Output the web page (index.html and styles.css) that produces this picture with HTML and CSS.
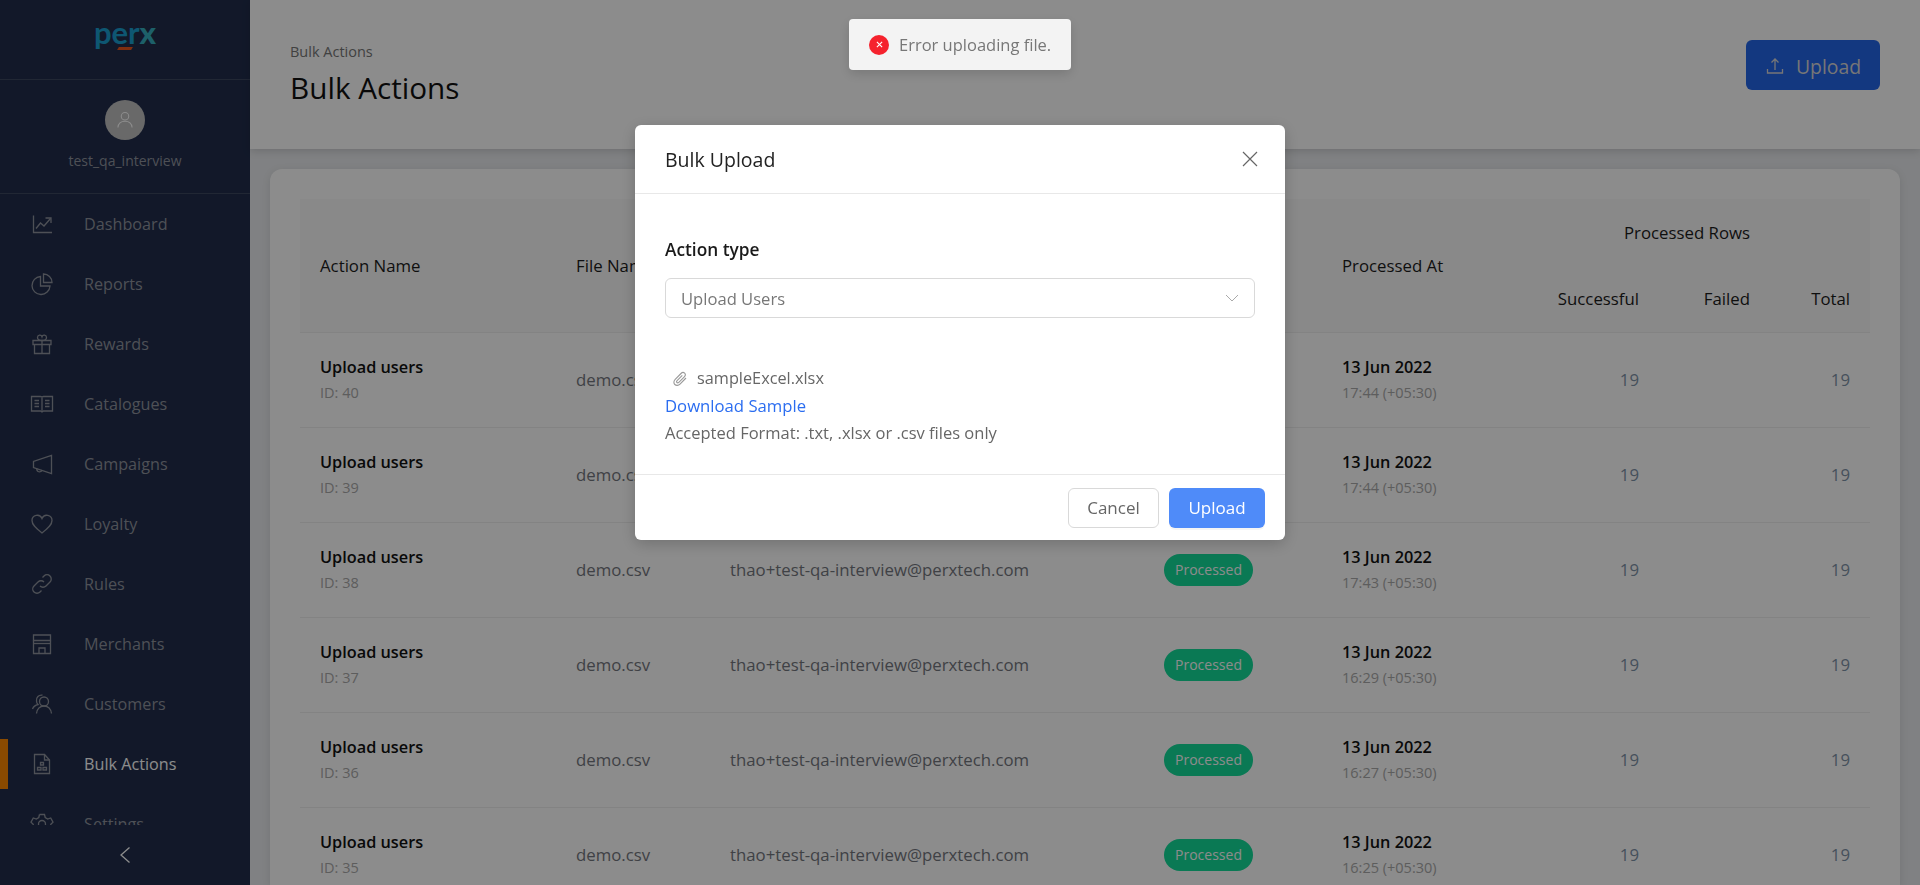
FILE: index.html
```html
<!DOCTYPE html>
<html>
<head>
<meta charset="UTF-8">
<title>Bulk Actions</title>
<link rel="stylesheet" href="styles.css">
</head>
<body>
<div class="layout">
	<!-- sidebar -->
	<aside class="sidebar">
		<div class="logo"><span class="logo-text">per<b>x</b></span><i class="logo-mark"></i></div>
		<div class="profile">
			<div class="avatar">
				<svg viewBox="0 0 24 24" width="20" height="20"><circle cx="12" cy="7.5" r="4.5"/><path d="M3.5 21c.5-5 4-7.5 8.5-7.5s8 2.500 8.500 7.500"/></svg>
			</div>
			<div class="username">test_qa_interview</div>
		</div>
		<nav class="menu">
			<a class="menu-item"><svg viewBox="0 0 24 24"><path d="M3.500 3.500V20.500H22"/><path d="M6 16.500l4.500-5.500 3.500 3 6.500-7.500"/><path d="M15.500 6H21v5"/></svg>Dashboard</a>
			<a class="menu-item"><svg viewBox="0 0 24 24"><path d="M10.500 4.500a9 9 0 1 0 9.500 9.500H10.500Z"/><path d="M13.500 2a8.500 8.500 0 0 1 8.500 8.500h-8.500Z"/></svg>Reports</a>
			<a class="menu-item"><svg viewBox="0 0 24 24"><path d="M3 8.500h18v4H3Z"/><path d="M4.500 12.500V21.500h15v-9"/><path d="M12 8.500v13"/><path d="M12 8.500C9 8.500 7.500 7.500 7.500 5.500a2.300 2.300 0 0 1 4.500-.7 2.300 2.300 0 0 1 4.500.7C16.500 7.500 15 8.500 12 8.500Z"/></svg>Rewards</a>
			<a class="menu-item"><svg viewBox="0 0 24 24"><path d="M1.500 4.500h9c1 0 1.500.5 1.500 1 0-.5.5-1 1.500-1h9V19h-9l-1.500 1-1.500-1h-9Z"/><path d="M12 5.500V20"/><path d="M4.500 8.500h4.500M4.500 11.500h4.500M4.500 14.500h4.500M15 8.500h4.500M15 11.500h4.500M15 14.500h4.500"/></svg>Catalogues</a>
			<a class="menu-item"><svg viewBox="0 0 24 24"><path d="M21.500 3.500V21.500L3.500 15.500V9.500Z"/><path d="M7 16.500a2.600 2.600 0 0 0 5 1.500"/></svg>Campaigns</a>
			<a class="menu-item"><svg viewBox="0 0 24 24"><path d="M12 21C5 15.500 2 12.500 2 8.500A5.200 5.200 0 0 1 12 6.500 5.200 5.200 0 0 1 22 8.500C22 12.500 19 15.500 12 21Z"/></svg>Loyalty</a>
			<a class="menu-item"><svg viewBox="0 0 24 24"><path d="M10 14a4.200 4.200 0 0 0 6 0l4-4a4.200 4.200 0 0 0-6-6l-1.500 1.500"/><path d="M14 10a4.200 4.200 0 0 0-6 0l-4 4a4.200 4.200 0 0 0 6 6l1.500-1.500"/></svg>Rules</a>
			<a class="menu-item"><svg viewBox="0 0 24 24"><path d="M3.500 3h17v5.500h-17Z"/><path d="M3.500 8.500v13h17v-13"/><path d="M3.500 11.500h17"/><path d="M9 21.500v-5.500h6v5.500"/></svg>Merchants</a>
			<a class="menu-item"><svg viewBox="0 0 24 24"><circle cx="14" cy="9.500" r="4.500"/><path d="M6.500 21.500c.5-4.500 3.500-7.500 7.500-7.500s7 3 7.500 7.500"/><path d="M12.500 3.200A5 5 0 0 0 6.500 9c0 1.500.5 2.500 1.500 3.500C5.500 13 3.500 14.500 2.500 17"/></svg>Customers</a>
			<a class="menu-item active"><svg viewBox="0 0 24 24"><path d="M4.500 2.500h10l5 5.500v13.500h-15Z"/><path d="M14.500 2.500V8h5"/><path d="M10.500 10.500h3v2.500h-3ZM7.500 15.500h3.500v2.500H7.500ZM13 15.500h3.500v2.500H13Z"/></svg>Bulk Actions</a>
			<a class="menu-item"><svg viewBox="0 0 24 24"><circle cx="12" cy="12" r="3.500"/><path d="M9.500 2.500h5l.7 3 2.500 1.500 3-1 2.300 4.200-2.200 2.100v2.900"/><path d="M9.500 2.500l-.7 3-2.500 1.500-3-1L1 10.200l2.200 2.100v2.900"/></svg>Settings</a>
		</nav>
		<div class="collapse">
			<svg viewBox="0 0 12 18" width="12" height="18"><path d="M10.500 1.500L2 9l8.500 7.500"/></svg>
		</div>
	</aside>

	<!-- main area -->
	<main class="main">
		<header class="page-header">
			<div>
				<div class="breadcrumb">Bulk Actions</div>
				<h1 class="page-title">Bulk Actions</h1>
			</div>
			<button class="btn-upload">
				<svg viewBox="0 0 20 20" width="20" height="20"><path d="M10 14V3M6.500 6.500L10 3l3.500 3.500"/><path d="M2.500 13v4h15v-4"/></svg>
				Upload
			</button>
		</header>
		<section class="content">
			<div class="card">
				<table class="list">
					<colgroup>
						<col class="c-name"><col class="c-file"><col class="c-user"><col class="c-status"><col class="c-date"><col class="c-ok"><col class="c-fail"><col class="c-total">
					</colgroup>
					<thead>
						<tr>
							<th rowspan="2">Action Name</th>
							<th rowspan="2">File Name</th>
							<th rowspan="2">Uploaded By</th>
							<th rowspan="2">Status</th>
							<th rowspan="2" class="date-head">Processed At</th>
							<th colspan="3" class="group-head">Processed Rows</th>
						</tr>
						<tr>
							<th class="num">Successful</th>
							<th class="num">Failed</th>
							<th class="num">Total</th>
						</tr>
					</thead>
					<tbody>
						<tr>
							<td><div class="strong">Upload users</div><div class="sub">ID: 40</div></td>
							<td>demo.csv</td>
							<td>thao+test-qa-interview@perxtech.com</td>
							<td><span class="badge">Processed</span></td>
							<td><div class="strong">13 Jun 2022</div><div class="sub">17:44 (+05:30)</div></td>
							<td class="num count">19</td><td class="num count"></td><td class="num count">19</td>
						</tr>
						<tr>
							<td><div class="strong">Upload users</div><div class="sub">ID: 39</div></td>
							<td>demo.csv</td>
							<td>thao+test-qa-interview@perxtech.com</td>
							<td><span class="badge">Processed</span></td>
							<td><div class="strong">13 Jun 2022</div><div class="sub">17:44 (+05:30)</div></td>
							<td class="num count">19</td><td class="num count"></td><td class="num count">19</td>
						</tr>
						<tr>
							<td><div class="strong">Upload users</div><div class="sub">ID: 38</div></td>
							<td>demo.csv</td>
							<td>thao+test-qa-interview@perxtech.com</td>
							<td><span class="badge">Processed</span></td>
							<td><div class="strong">13 Jun 2022</div><div class="sub">17:43 (+05:30)</div></td>
							<td class="num count">19</td><td class="num count"></td><td class="num count">19</td>
						</tr>
						<tr>
							<td><div class="strong">Upload users</div><div class="sub">ID: 37</div></td>
							<td>demo.csv</td>
							<td>thao+test-qa-interview@perxtech.com</td>
							<td><span class="badge">Processed</span></td>
							<td><div class="strong">13 Jun 2022</div><div class="sub">16:29 (+05:30)</div></td>
							<td class="num count">19</td><td class="num count"></td><td class="num count">19</td>
						</tr>
						<tr>
							<td><div class="strong">Upload users</div><div class="sub">ID: 36</div></td>
							<td>demo.csv</td>
							<td>thao+test-qa-interview@perxtech.com</td>
							<td><span class="badge">Processed</span></td>
							<td><div class="strong">13 Jun 2022</div><div class="sub">16:27 (+05:30)</div></td>
							<td class="num count">19</td><td class="num count"></td><td class="num count">19</td>
						</tr>
						<tr>
							<td><div class="strong">Upload users</div><div class="sub">ID: 35</div></td>
							<td>demo.csv</td>
							<td>thao+test-qa-interview@perxtech.com</td>
							<td><span class="badge">Processed</span></td>
							<td><div class="strong">13 Jun 2022</div><div class="sub">16:25 (+05:30)</div></td>
							<td class="num count">19</td><td class="num count"></td><td class="num count">19</td>
						</tr>
					</tbody>
				</table>
			</div>
		</section>
	</main>
</div>

<!-- dialog on top of the dimmed page -->
<div class="overlay">
	<div class="modal">
		<div class="modal-header">
			<span class="modal-title">Bulk Upload</span>
			<svg class="modal-close" viewBox="0 0 16 16" width="16" height="16"><path d="M1 1l14 14M15 1L1 15"/></svg>
		</div>
		<div class="modal-body">
			<label class="field-label">Action type</label>
			<div class="select">
				<span>Upload Users</span>
				<svg viewBox="0 0 14 8" width="14" height="8"><path d="M1 1l6 6 6-6"/></svg>
			</div>
			<div class="sample">
				<div class="sample-file">
					<svg viewBox="0 0 16 16" width="16" height="16"><path d="M14 7L8 13.100c-1.600 1.600-3.900 1.700-5.200.4-1.300-1.300-1.200-3.600.4-5.200L9 2.500c1.100-1.100 2.700-1.200 3.600-.3.900.9.800 2.500-.3 3.600L6.800 11.300c-.6.600-1.400.6-1.900.2-.4-.5-.4-1.300.2-1.900L10.300 4.400"/></svg>
					sampleExcel.xlsx
				</div>
				<a class="sample-link">Download Sample</a>
				<div class="sample-note">Accepted Format: .txt, .xlsx or .csv files only</div>
			</div>
		</div>
		<div class="modal-footer">
			<button class="btn btn-default">Cancel</button>
			<button class="btn btn-primary">Upload</button>
		</div>
	</div>
</div>

<div class="toast">
	<span class="toast-icon">
		<svg viewBox="0 0 8 8" width="7" height="7"><path d="M1 1l6 6M7 1L1 7"/></svg>
	</span>
	Error uploading file.
</div>
</body>
</html>
```
FILE: styles.css
```css
*{box-sizing:border-box}
html,body{height:100%}
body{margin:0; overflow:hidden; font-family:"Open Sans","Liberation Sans",sans-serif; font-size:16.800px; color:#74777e}
svg{fill:none; stroke:currentColor; stroke-width:1.300}

.layout{display:flex; height:100vh}

/* sidebar */
.sidebar{width:250px; flex:none; display:flex; flex-direction:column; background:#212d4c; color:#8f939d}
.logo{height:80px; border-bottom:1px solid #3d4760; display:flex; flex-direction:column; align-items:center; padding-top:18px}
.logo-text{font-family:"Lato",sans-serif; font-weight:700; font-size:31px; line-height:28px; color:#1a9fd0}
.logo-text b{color:#35b0c0}
.logo-mark{width:14px; height:3px; background:#e8541e; transform:skewX(-30deg); margin-top:1px}
.profile{height:114px; border-bottom:1px solid #3d4760; display:flex; flex-direction:column; align-items:center; padding-top:20px}
.avatar{width:40px; height:40px; border-radius:50%; background:#bfbfbf; color:#fff; display:flex; align-items:center; justify-content:center}
.username{margin-top:11px; font-size:14px; line-height:20px}
.menu{flex:1; overflow:hidden; min-height:0; display:flex; flex-direction:column; gap:10px; padding-top:5px}
.menu-item{display:flex; flex:none; align-items:center; gap:30px; height:50px; padding-left:30px; font-size:16.200px}
.menu-item svg{width:24px; height:24px; flex:none}
.menu-item.active{color:#fff; box-shadow:inset 8px 0 0 #fb8700}
.menu-item.active svg{color:#8f939d}
.collapse{height:60px; flex:none; display:flex; align-items:center; justify-content:center; color:#fff}

/* page */
.main{flex:1; min-width:0; background:#e9ebee; display:flex; flex-direction:column}
.page-header{height:149px; flex:none; background:#fff; box-shadow:0 2px 8px rgba(0,0,0,.15); display:flex; justify-content:space-between; align-items:flex-start; padding:40px 40px 0; position:relative}
.breadcrumb{font-size:14.500px; line-height:24px; color:#777}
.page-title{margin:4px 0 0; font-size:29.700px; line-height:40px; font-weight:400; color:#111}
.btn-upload{width:134px; height:50px; border:0; padding:2px 0 0; border-radius:6px; background:#2466ea; color:#d8d8d8; font:400 19.400px "Open Sans",sans-serif; display:flex; align-items:center; justify-content:center; gap:11px}
.content{flex:1; padding:20px 20px 0; min-height:0}
.card{background:#fff; border-radius:12px 12px 0 0; padding:30px; height:100%; box-shadow:0 2px 8px rgba(0,0,0,.1)}

/* table */
.list{width:1570px; table-layout:fixed; border-collapse:collapse}
.c-name{width:256px}
.c-file{width:154px}
.c-user{width:434px}
.c-status{width:178px}
.c-date{width:218px}
.c-ok{width:119px}
.c-fail{width:111px}
.c-total{width:100px}
.list th{background:#fafafa; height:66px; padding:0 20px; text-align:left; font-weight:500; font-size:16.800px; color:#1c1c1c; white-space:nowrap}
.list thead tr:last-child th{height:67px}
.list thead{border-bottom:1px solid #eee}
.list th.group-head{text-align:center; padding-right:56px}
.list th.date-head{vertical-align:middle}
.list th.num{text-align:right; padding-left:0}
.list td{height:95px; padding:0 20px; border-bottom:1px solid #eee; white-space:nowrap; font-size:16.800px}
.list td.num{text-align:right}
.strong{font-weight:600; font-size:16.300px; line-height:24px; color:#111}
.sub{font-size:14.500px; line-height:22px; color:#aaa; margin-top:3px}
.count{color:#7f93a8}
.badge{display:inline-block; width:89px; height:32px; border-radius:16px; background:#13dc9a; color:#fff; font-size:14px; line-height:32px; text-align:center}

/* overlay + dialog */
.overlay{position:fixed; inset:0; background:rgba(0,0,0,.45); display:flex; justify-content:center; align-items:flex-start; padding-top:125px}
.modal{width:650px; height:415px; background:#fff; border-radius:6px; box-shadow:0 4px 16px rgba(0,0,0,.2); display:flex; flex-direction:column}
.modal-header{height:69px; flex:none; border-bottom:1px solid #e8e8e8; display:flex; align-items:center; justify-content:space-between; padding:0 27px 0 30px}
.modal-title{font-size:19.500px; font-weight:500; color:#222}
.modal-close{color:#666; stroke-width:1.200}
.modal-body{flex:1; padding:44px 30px 0}
.field-label{display:block; font-size:17.300px; font-weight:600; line-height:24px; color:#1a1a1a; margin-bottom:16px}
.select{height:40px; border:1px solid #d9d9d9; border-radius:6px; display:flex; align-items:center; justify-content:space-between; padding:0 15px; color:#777; font-size:16.600px}
.select svg{color:#aaa; stroke-width:1}
.sample{margin-top:47px; font-size:16.500px; line-height:27px; color:#666}
.sample-file{display:flex; align-items:center; gap:9px; padding-left:7px; color:#666; font-size:16.300px}
.sample-file svg{color:#999; stroke-width:1.100}
.sample-link{display:block; color:#2b6df0; font-size:16.700px}
.modal-footer{height:66px; flex:none; border-top:1px solid #e8e8e8; display:flex; justify-content:flex-end; align-items:center; gap:10px; padding:0 20px}
.btn{height:40px; border-radius:6px; font:400 17px "Open Sans",sans-serif; cursor:pointer}
.btn-default{width:91px; background:#fff; border:1px solid #d9d9d9; color:#666}
.btn-primary{width:96px; background:#4f8bf9; border:0; color:#fff; box-shadow:0 2px 0 rgba(0,0,0,.04)}

/* toast */
.toast{position:fixed; top:19px; left:849px; width:222px; height:51px; background:#f3f3f3; border-radius:4px; box-shadow:0 4px 12px rgba(0,0,0,.15); display:flex; align-items:center; gap:10px; padding-left:20px; color:#777; font-size:16.500px}
.toast-icon{width:20px; height:20px; border-radius:50%; background:#f5222d; color:#fff; display:flex; align-items:center; justify-content:center}
```
